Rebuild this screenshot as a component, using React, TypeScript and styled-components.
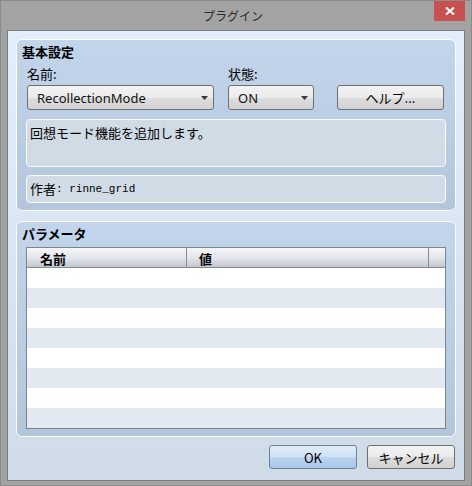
import React from "react";
import styled, { createGlobalStyle } from "styled-components";

const GlobalStyle = createGlobalStyle`
  html, body { margin: 0; padding: 0; background: #a3a3a3; }
  body { font-family: "Noto Sans", "Noto Sans CJK JP", sans-serif; color: #000; }
  * { box-sizing: border-box; }
`;

const CJK = `"Noto Sans CJK JP", "Noto Sans", sans-serif`;
const LATIN = `"Noto Sans", "Noto Sans CJK JP", sans-serif`;

const Window = styled.div`
  width: 472px;
  height: 486px;
  border: 1px solid #8a8a8a;
  background: #a3a3a3;
  display: flex;
  flex-direction: column;
`;

const TitleBar = styled.div`
  height: 29px;
  display: grid;
  grid-template-columns: 1fr auto 1fr;
  padding-right: 6px;
`;

const Title = styled.div`
  grid-column: 2;
  align-self: center;
  font-family: ${CJK};
  font-size: 12px;
  line-height: 16px;
  color: #2b2b2b;
  padding-top: 1px;
`;

const CloseButton = styled.div`
  grid-column: 3;
  justify-self: end;
  align-self: start;
  width: 31px;
  height: 20px;
  background: #c75050;
  display: flex;
  align-items: center;
  justify-content: center;
`;

const Client = styled.div`
  flex: 1;
  margin: 0 6px 4px 6px;
  border: 1px solid #7d7d7d;
  background: linear-gradient(to bottom, #e3eefc, #cfdbe7);
  padding: 8px 8px 10px 8px;
  display: flex;
  flex-direction: column;
`;

const GroupBox = styled.div<{ $gap?: number }>`
  margin-top: ${(p) => p.$gap ?? 0}px;
  border: 1px solid #fbfdff;
  border-radius: 6px;
  background: linear-gradient(to bottom, #c3d5ea, #b3c6dc);
  padding: 4px 9px 7px 9px;
  display: flex;
  flex-direction: column;
`;

const GroupTitle = styled.div`
  font-family: ${CJK};
  font-weight: bold;
  font-size: 13px;
  line-height: 16px;
  margin-left: -4px;
`;

const FieldGrid = styled.div`
  margin-top: 6px;
  margin-left: 1px;
  display: grid;
  grid-template-columns: 187px 86px 107px;
  grid-template-rows: 16px 25px;
  column-gap: 14px;
  row-gap: 3px;
`;

const Label = styled.div`
  font-family: ${CJK};
  font-size: 13px;
  line-height: 16px;
`;

const SelectBox = styled.div`
  height: 25px;
  border: 1px solid #707070;
  border-radius: 3px;
  background: linear-gradient(to bottom, #f3f3f3 0%, #ebebeb 50%, #dddddd 51%, #d3d3d3 100%);
  display: flex;
  align-items: center;
  justify-content: space-between;
  padding: 0 5px 0 9px;
  font-family: ${LATIN};
  font-size: 13px;
  color: #111;
`;

const PushButton = styled.div<{ $primary?: boolean; $w: number; $h: number; $ml?: number }>`
  width: ${(p) => p.$w}px;
  height: ${(p) => p.$h}px;
  margin-left: ${(p) => p.$ml ?? 0}px;
  border: 1px solid ${(p) => (p.$primary ? "#6e8193" : "#707070")};
  border-radius: 3px;
  background: ${(p) =>
    p.$primary
      ? "linear-gradient(to bottom, #e0ecf8 0%, #cfe1f4 50%, #bbd4ee 51%, #a7c6e8 100%)"
      : "linear-gradient(to bottom, #f3f3f3 0%, #ebebeb 50%, #dddddd 51%, #d1d1d1 100%)"};
  display: flex;
  align-items: center;
  justify-content: center;
  font-family: ${CJK};
  font-size: 13px;
  color: #000;
`;

const InfoBox = styled.div<{ $h: number; $gap: number; $center?: boolean }>`
  margin-top: ${(p) => p.$gap}px;
  height: ${(p) => p.$h}px;
  border: 1px solid #f8fafc;
  border-radius: 4px;
  background: #d0dbe6;
  padding: ${(p) => (p.$center ? "0 3px" : "4px 3px")};
  display: flex;
  align-items: ${(p) => (p.$center ? "center" : "flex-start")};
  font-family: ${CJK};
  font-size: 13px;
  line-height: 18px;
`;

const Mono = styled.span`
  font-family: "Liberation Mono", "Noto Sans CJK JP", monospace;
  font-size: 11px;
`;

const Table = styled.div`
  margin-top: 5px;
  height: 182px;
  border: 1px solid #7f848c;
  background: #fff;
  display: flex;
  flex-direction: column;
`;

const HeaderRow = styled.div`
  height: 20px;
  display: grid;
  grid-template-columns: 160px 242px 1fr;
  border-bottom: 1px solid #868b93;
  background: linear-gradient(to bottom, #f5f6f8 0%, #e3e6ea 50%, #c3c8cf 100%);
`;

const HeaderCell = styled.div<{ $last?: boolean }>`
  border-right: ${(p) => (p.$last ? "none" : "1px solid #868b93")};
  padding: 2px 0 0 12px;
  font-family: ${CJK};
  font-weight: bold;
  font-size: 13px;
  line-height: 17px;
`;

const DataRow = styled.div<{ $alt: boolean }>`
  height: 20px;
  flex-shrink: 0;
  background: ${(p) => (p.$alt ? "#e3e9f1" : "#ffffff")};
`;

const ButtonRow = styled.div`
  margin-top: 8px;
  display: flex;
  justify-content: flex-end;
  gap: 10px;
  padding-right: 1px;
`;

const Arrow = () => (
  <svg width="7" height="4" viewBox="0 0 7 4">
    <polygon points="0,0 7,0 3.5,4" fill="#3a3a3a" />
  </svg>
);

export default function App() {
  const rows = Array.from({ length: 8 }, (_, i) => i);
  return (
    <>
      <GlobalStyle />
      <Window>
        <TitleBar>
          <Title>プラグイン</Title>
          <CloseButton>
            <svg width="10" height="8" viewBox="0 0 10 8">
              <path d="M1 0.5 L9 7.5 M9 0.5 L1 7.5" stroke="#fff" strokeWidth="2" />
            </svg>
          </CloseButton>
        </TitleBar>
        <Client>
          <GroupBox>
            <GroupTitle>基本設定</GroupTitle>
            <FieldGrid>
              <Label>名前:</Label>
              <Label>状態:</Label>
              <div />
              <SelectBox>
                <span>RecollectionMode</span>
                <Arrow />
              </SelectBox>
              <SelectBox>
                <span>ON</span>
                <Arrow />
              </SelectBox>
              <PushButton $w={107} $h={25} $ml={9}>
                ヘルプ...
              </PushButton>
            </FieldGrid>
            <InfoBox $h={48} $gap={9}>
              回想モード機能を追加します。
            </InfoBox>
            <InfoBox $h={28} $gap={8} $center>
              <span>作者</span>
              <Mono>: rinne_grid</Mono>
            </InfoBox>
          </GroupBox>
          <GroupBox $gap={10}>
            <GroupTitle>パラメータ</GroupTitle>
            <Table>
              <HeaderRow>
                <HeaderCell style={{ paddingLeft: 13 }}>名前</HeaderCell>
                <HeaderCell>値</HeaderCell>
                <HeaderCell $last />
              </HeaderRow>
              {rows.map((i) => (
                <DataRow key={i} $alt={i % 2 === 1} />
              ))}
            </Table>
          </GroupBox>
          <ButtonRow>
            <PushButton $primary $w={88} $h={24}>
              OK
            </PushButton>
            <PushButton $w={88} $h={24}>
              キャンセル
            </PushButton>
          </ButtonRow>
        </Client>
      </Window>
    </>
  );
}
